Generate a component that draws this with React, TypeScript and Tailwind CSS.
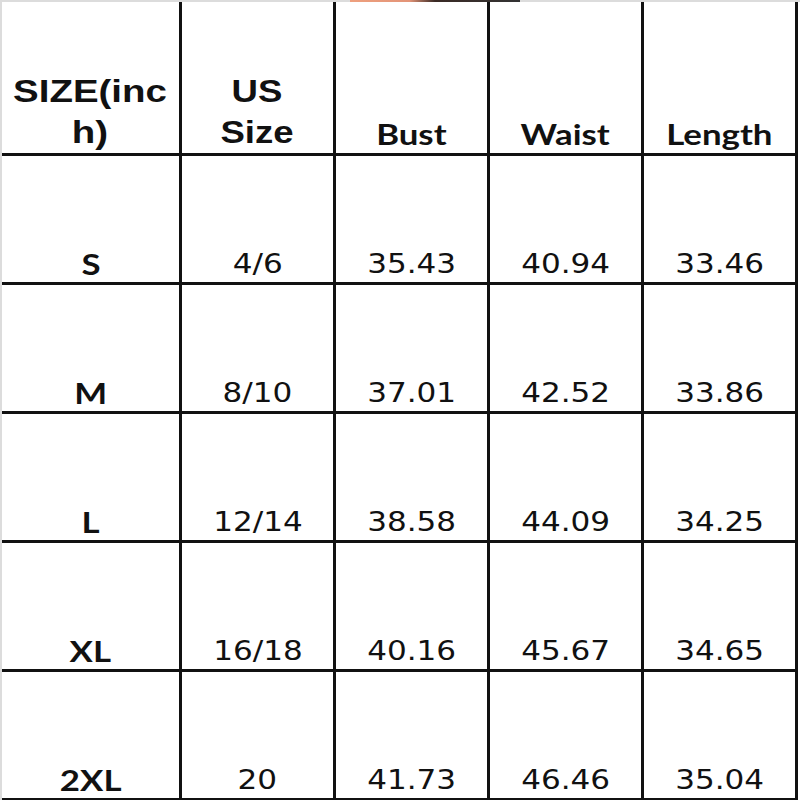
import React from "react";

const rows = [
  ["S", "4/6", "35.43", "40.94", "33.46"],
  ["M", "8/10", "37.01", "42.52", "33.86"],
  ["L", "12/14", "38.58", "44.09", "34.25"],
  ["XL", "16/18", "40.16", "45.67", "34.65"],
  ["2XL", "20", "41.73", "46.46", "35.04"],
];

export default function App() {
  return (
    <div className="relative w-[800px] h-[800px] bg-white overflow-hidden">
      <div className="absolute top-0 left-[350px] w-[170px] h-[2px] bg-[linear-gradient(90deg,#eea07e_0%,#e39478_35%,#3a2a25_50%,#333_100%)]" />
      <div className="flex flex-col h-full border-t-2 border-t-[#dcdcdc] border-l-2 border-l-[#dcdcdc] text-[#111]">
        <div className="grid grid-cols-[180px_154px_154px_154px_154px] grid-rows-[154px_129px_129px_129px_129px_129px]">
          <div className="border-r-[3px] border-b-[3px] border-[#111] flex items-end justify-center pb-0 font-['Liberation_Sans',Arial,sans-serif] font-bold text-[31px] leading-[41px] text-center">
            <span className="inline-block scale-x-[1.24]">SIZE(inc<br />h)</span>
          </div>
          <div className="border-r-[3px] border-b-[3px] border-[#111] flex items-end justify-center pb-0 font-['Liberation_Sans',Arial,sans-serif] font-bold text-[31px] leading-[41px] text-center">
            <span className="inline-block scale-x-[1.18]">US<br />Size</span>
          </div>
          {["Bust", "Waist", "Length"].map((h) => (
            <div
              key={h}
              className="border-r-[3px] border-b-[3px] border-[#111] flex items-end justify-center pb-[1px] font-['Lato',sans-serif] font-bold text-[29px] leading-[36px]"
            >
              <span className="inline-block scale-x-[1.2]">{h}</span>
            </div>
          ))}
          {rows.map((r) =>
            r.map((c, i) => (
              <div
                key={r[0] + i}
                className={
                  "border-r-[3px] border-b-[3px] border-[#111] flex items-end justify-center pb-0 " +
                  (i === 0
                    ? "font-['Lato',sans-serif] font-bold text-[29px] leading-[36px]"
                    : "font-['DejaVu_Sans',Verdana,sans-serif] text-[27px] leading-[36px]")
                }
              >
                <span className={i === 0 ? "inline-block scale-x-[1.2]" : "inline-block scale-x-[1.15]"}>{c}</span>
              </div>
            ))
          )}
        </div>
      </div>
    </div>
  );
}
